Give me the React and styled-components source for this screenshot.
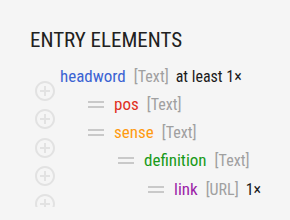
import React from "react";
import styled, { createGlobalStyle } from "styled-components";

const Global = createGlobalStyle`
  html, body { margin: 0; padding: 0; background: #f5f5f5; }
  body { font-family: Roboto, "Noto Sans", sans-serif; font-stretch: 87.5%; }
`;

const Page = styled.div`
  width: 290px;
  height: 220px;
  box-sizing: border-box;
  padding: 28px 0 0 30px;
  background: #f5f5f5;
  overflow: hidden;
`;

const Title = styled.h2`
  margin: 0;
  font-size: 21px;
  line-height: 24px;
  font-weight: 400;
  color: #212121;
`;

const Editor = styled.div`
  display: flex;
  margin-top: 10px;
`;

const Gutter = styled.div`
  width: 30px;
  flex: none;
  height: 145px;
  overflow: hidden;
  display: flex;
  flex-direction: column;
  padding-top: 15px;
  box-sizing: border-box;
`;

const AddButton = styled.div`
  height: 28.25px;
  flex: none;
  display: flex;
  align-items: center;
  justify-content: flex-start;
  padding-left: 3px;
  color: #e2e2e2;
`;

const Tree = styled.div`
  display: flex;
  flex-direction: column;
`;

const Row = styled.div`
  height: 28.25px;
  display: flex;
  align-items: center;
  padding-left: ${(p) => (p.$level === 0 ? 0 : p.$level * 30 - 2)}px;
  white-space: nowrap;
`;

const Label = styled.span`
  font-size: 17px;
  line-height: 20px;
`;

const Handle = styled.span`
  display: inline-flex;
  flex-direction: column;
  justify-content: center;
  gap: 3px;
  width: 16px;
  margin-right: 10px;
  & > i {
    display: block;
    height: 2px;
    background: #c9c9c9;
  }
`;

const Name = styled.span`
  color: ${(p) => p.$color};
`;

const Type = styled.span`
  color: #a0a0a0;
  font-size: 16px;
  margin-left: 8px;
`;

const Count = styled.span`
  color: #1a1a1a;
  font-size: 16px;
  margin-left: 7px;
`;

const PlusIcon = () => (
  <svg width="24" height="24" viewBox="0 0 24 24" fill="currentColor">
    <path d="M13 7h-2v4H7v2h4v4h2v-4h4v-2h-4V7zm-1-5C6.48 2 2 6.48 2 12s4.48 10 10 10 10-4.48 10-10S17.52 2 12 2zm0 18c-4.41 0-8-3.59-8-8s3.59-8 8-8 8 3.59 8 8-3.59 8-8 8z" />
  </svg>
);

const rows = [
  { name: "headword", color: "#3b63d3", type: "Text", level: 0, count: "at least 1×" },
  { name: "pos", color: "#e0301e", type: "Text", level: 1 },
  { name: "sense", color: "#ff9a0f", type: "Text", level: 1 },
  { name: "definition", color: "#189a18", type: "Text", level: 2 },
  { name: "link", color: "#9c1ea8", type: "URL", level: 3, count: "1×" },
];

export default function App() {
  return (
    <Page>
      <Global />
      <Title>ENTRY ELEMENTS</Title>
      <Editor>
        <Gutter>
          {rows.map((r) => (
            <AddButton key={r.name}>
              <PlusIcon />
            </AddButton>
          ))}
        </Gutter>
        <Tree>
          {rows.map((r) => (
            <Row key={r.name} $level={r.level}>
              {r.level > 0 && (
                <Handle>
                  <i />
                  <i />
                </Handle>
              )}
              <Label>
                <Name $color={r.color}>{r.name}</Name>
                <Type>[{r.type}]</Type>
                {r.count && <Count>{r.count}</Count>}
              </Label>
            </Row>
          ))}
        </Tree>
      </Editor>
    </Page>
  );
}
